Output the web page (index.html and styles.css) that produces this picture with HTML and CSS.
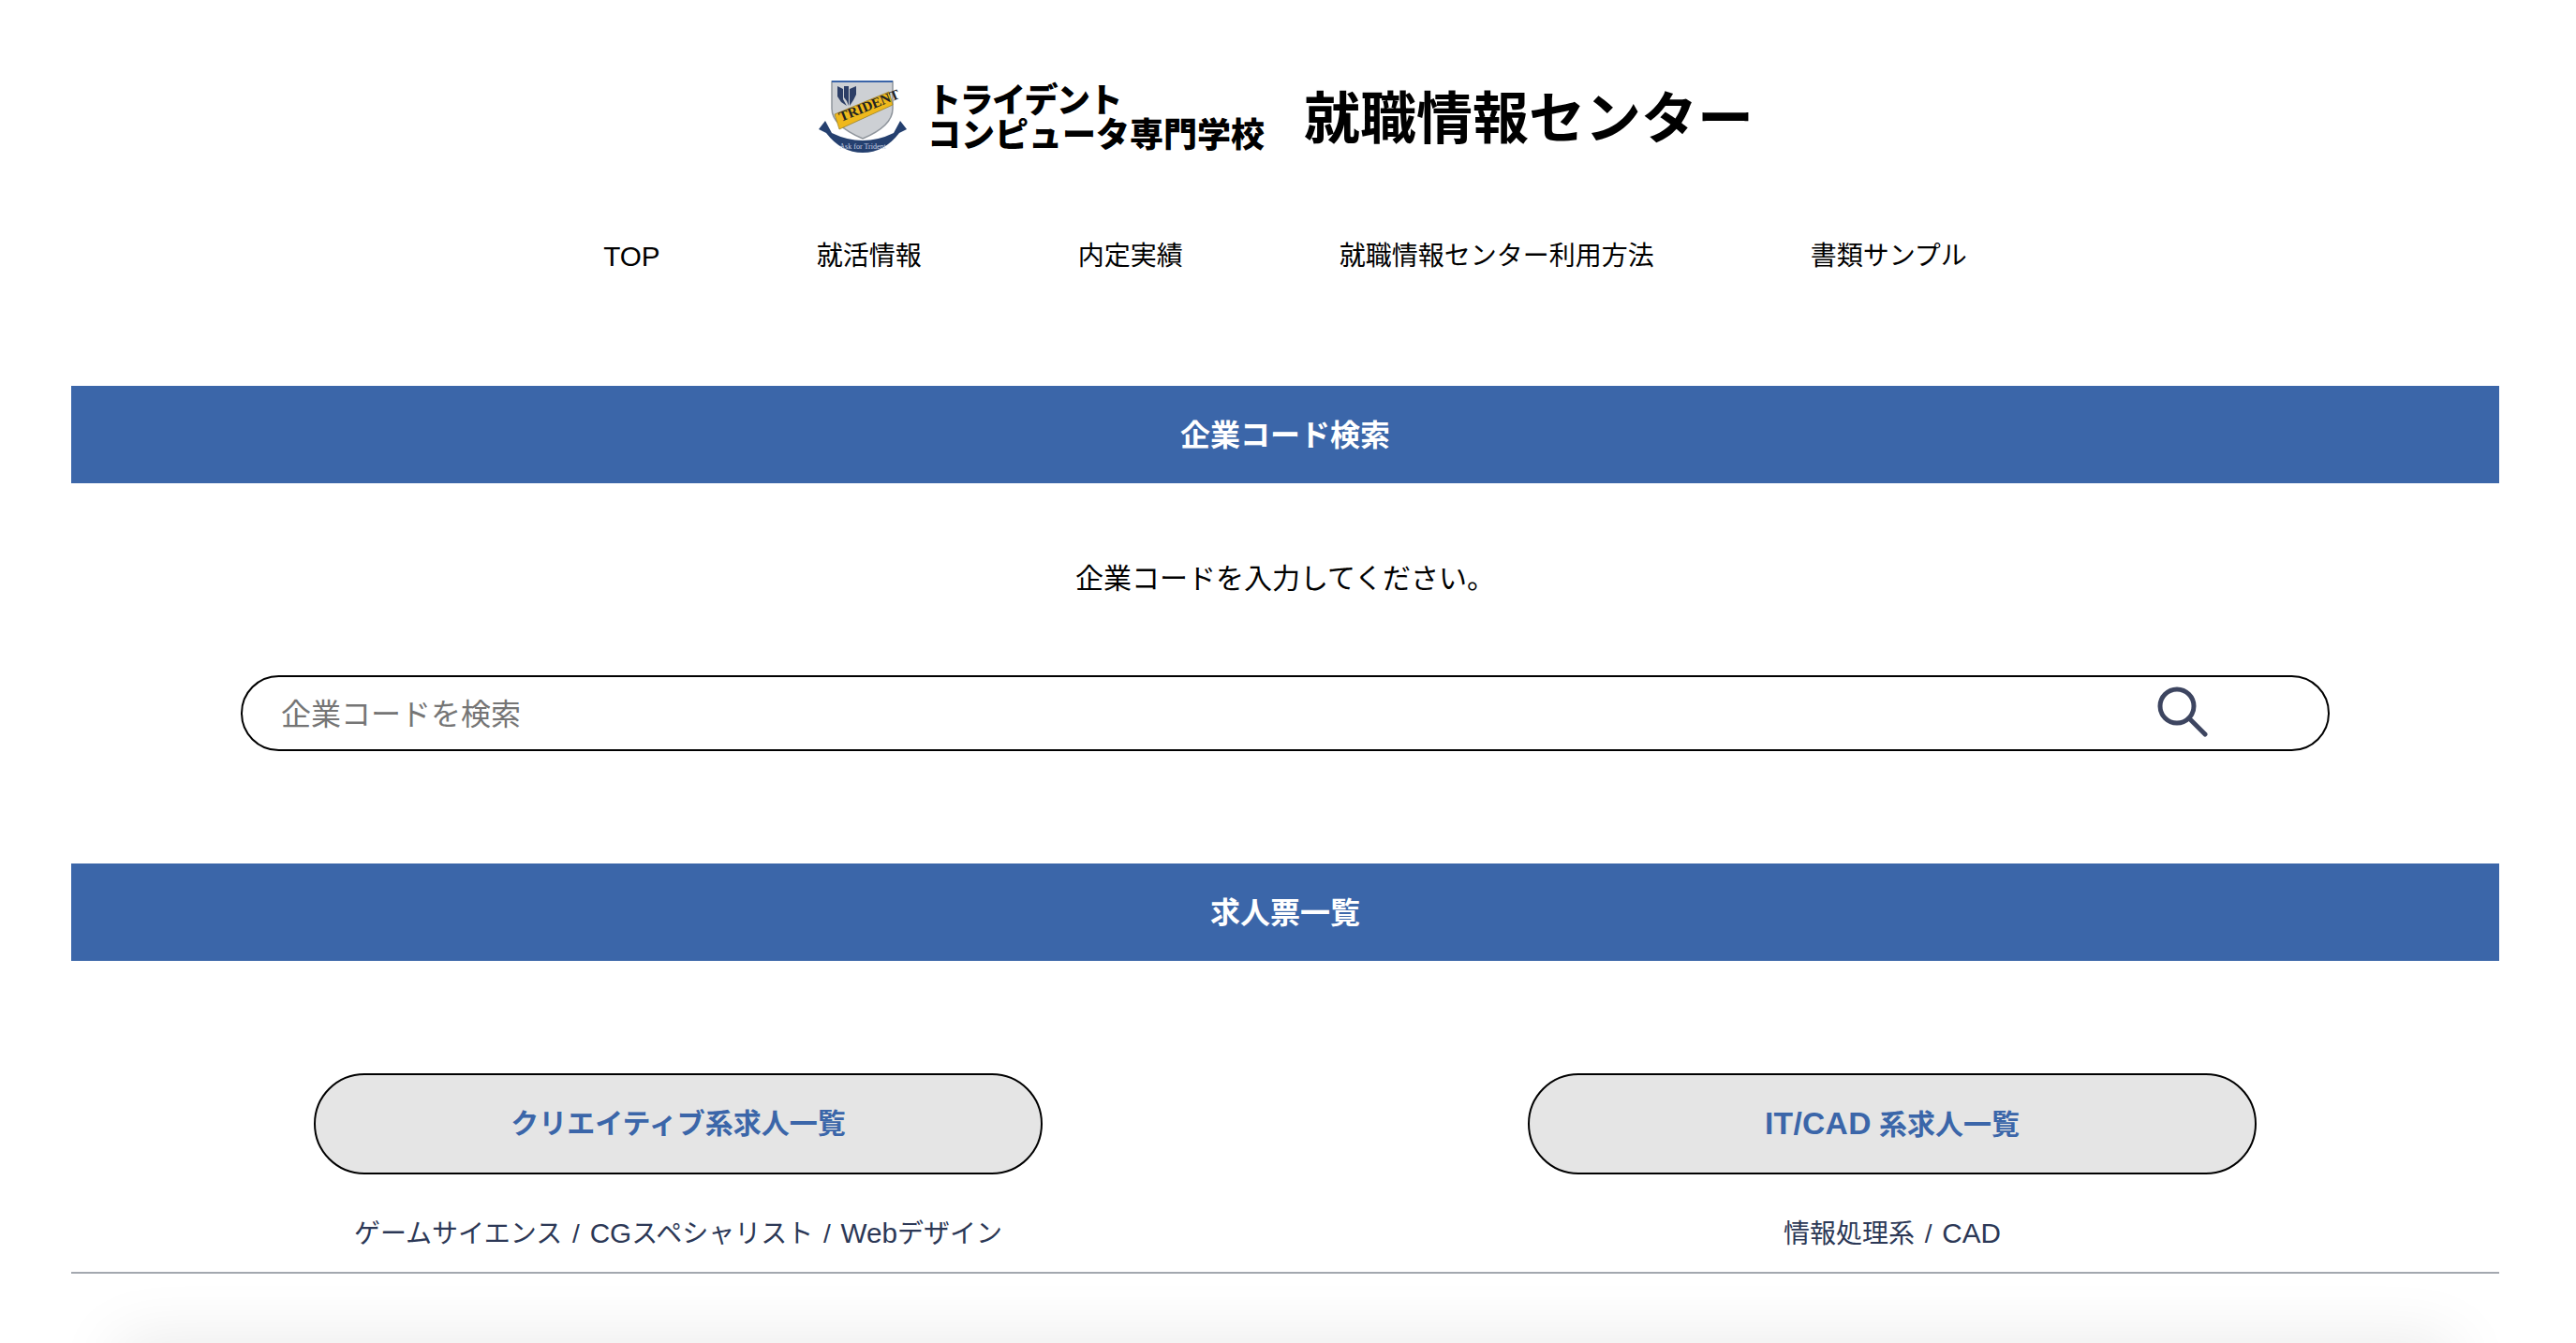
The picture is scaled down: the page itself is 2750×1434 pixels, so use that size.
FILE: index.html
```html
<!DOCTYPE html>
<html lang="ja">
<head>
<meta charset="utf-8">
<title>就職情報センター</title>
<link rel="stylesheet" href="styles.css">
</head>
<body>
<header class="header">
  <div class="brand">
    <svg class="crest" width="94" height="78" viewBox="0 0 94 78">
      <path d="M14 1H79V30C79 44 66 54 47 62C28 54 14 44 14 30Z" fill="#cdd0d4" stroke="#8f959c" stroke-width="1.5"/>
      <path d="M14 1H79" stroke="#3a64a8" stroke-width="2"/>
      <path d="M20 6l6 3v11l4 7-6-4-4-6zM27 6h5v21l-2-5-3-4zM33 9l7-3v9l-3 6-4 6z" fill="#2c3e66"/>
      <path d="M17 36L75 12 79 26 22 52Z" fill="#efb81c" stroke="#8f7a20" stroke-width=".7"/>
      <text class="crest-word" transform="translate(24 44) rotate(-22)">TRIDENT</text>
      <path d="M0 52L7 43 14 56Q47 72 80 56L87 43 94 52 86 56Q70 77 47 77Q24 77 8 56Z" fill="#25406f"/>
      <text class="crest-motto" x="47" y="73" text-anchor="middle">Ask for Trident</text>
    </svg>
    <div class="school"><span class="school-top">トライデント</span><br>コンピュータ専門学校</div>
    <h1 class="site-title">就職情報センター</h1>
  </div>
  <nav class="nav">
    <a class="nav-item latin">TOP</a>
    <a class="nav-item">就活情報</a>
    <a class="nav-item">内定実績</a>
    <a class="nav-item">就職情報センター利用方法</a>
    <a class="nav-item">書類サンプル</a>
  </nav>
</header>
<main class="main">
  <h2 class="bar">企業コード検索</h2>
  <p class="intro">企業コードを入力してください。</p>
  <div class="search">
    <span class="placeholder">企業コードを検索</span>
    <svg class="search-icon" width="54" height="54" viewBox="0 0 54 54" fill="none" stroke="#3d4560" stroke-linecap="round">
      <circle cx="21" cy="21" r="18" stroke-width="5"/>
      <path d="M34 34L51 51" stroke-width="5"/>
    </svg>
  </div>
  <h2 class="bar">求人票一覧</h2>
  <div class="jobs">
    <div class="job">
      <a class="pill">クリエイティブ系求人一覧</a>
      <p class="job-note">ゲームサイエンス / <span class="latin">CG</span>スペシャリスト / <span class="latin">Web</span>デザイン</p>
    </div>
    <div class="job">
      <a class="pill"><span class="latin pill-latin">IT/CAD</span> 系求人一覧</a>
      <p class="job-note">情報処理系 / <span class="latin">CAD</span></p>
    </div>
  </div>
  <hr class="rule">
  <div class="shade"><div class="card"></div></div>
</main>
</body>
</html>
```
FILE: styles.css
```css
* { box-sizing: border-box; }
html, body { margin: 0; }
body {
  height: 1434px;
  overflow: hidden;
  background: #fff;
  color: #000;
  font-family: "Liberation Sans", "Noto Sans CJK JP", sans-serif;
}
.latin { font-size: 1.06em; }
.header { display: flex; flex-direction: column; align-items: center; }
.brand {
  display: flex;
  align-items: center;
  height: 126px;
  margin-top: 65px;
  padding-right: 4px;
}
.crest { margin: 0 22px 7px 0; }
.crest-word { font: 700 15px "Liberation Serif", serif; fill: #222; }
.crest-motto { font: 8px "Liberation Serif", serif; fill: #c8d2e4; }
.school {
  margin: 0 42px 4px 0;
  font-size: 36px;
  font-weight: 900;
  line-height: 37px;
}
.school-top { letter-spacing: -1.5px; }
.site-title { margin: 0; font-size: 60px; font-weight: 700; line-height: 1; }
.nav {
  display: flex;
  justify-content: center;
  gap: 167px;
  height: 221px;
  padding: 58px 6px 0 0;
  font-size: 28px;
  line-height: 50px;
}
.nav-item { color: #000; }
.main { padding: 0 82px 0 76px; }
.bar {
  margin: 0;
  height: 104px;
  background: #3b66a9;
  color: #fff;
  font-size: 32px;
  font-weight: 700;
  line-height: 106px;
  text-align: center;
}
.intro {
  margin: 0;
  height: 205px;
  padding-top: 78px;
  font-size: 30px;
  line-height: 48px;
  text-align: center;
}
.search {
  display: flex;
  align-items: center;
  justify-content: space-between;
  width: 2230px;
  height: 81px;
  margin: 0 0 120px 181px;
  padding: 0 128px 3px 41px;
  border: 2px solid #000;
  border-radius: 41px;
}
.placeholder { font-size: 32px; color: #757575; }
.search-icon { display: block; }
.jobs {
  display: flex;
  justify-content: space-between;
  padding: 120px 259px 0 259px;
}
.job { display: flex; flex-direction: column; align-items: center; width: 778px; }
.pill {
  display: block;
  width: 100%;
  height: 108px;
  background: #e5e5e5;
  border: 2px solid #000;
  border-radius: 54px;
  color: #3b66a9;
  font-size: 30px;
  font-weight: 700;
  line-height: 104px;
  text-align: center;
}
.pill-latin { font-size: 1.12em; letter-spacing: .3px; }
.job-note {
  margin: 0;
  height: 104px;
  padding-top: 39px;
  color: #2c3856;
  font-size: 28px;
  line-height: 48px;
  white-space: nowrap;
  word-spacing: 3px;
}
.rule { margin: 0; height: 2px; border: 0; background: #a3a8af; }
.shade { height: 74px; padding: 84px 60px 0; overflow: hidden; }
.card {
  height: 40px;
  background: #f2f2f2;
  box-shadow: 0 0 70px 10px rgba(0, 0, 0, .1);
}
```
